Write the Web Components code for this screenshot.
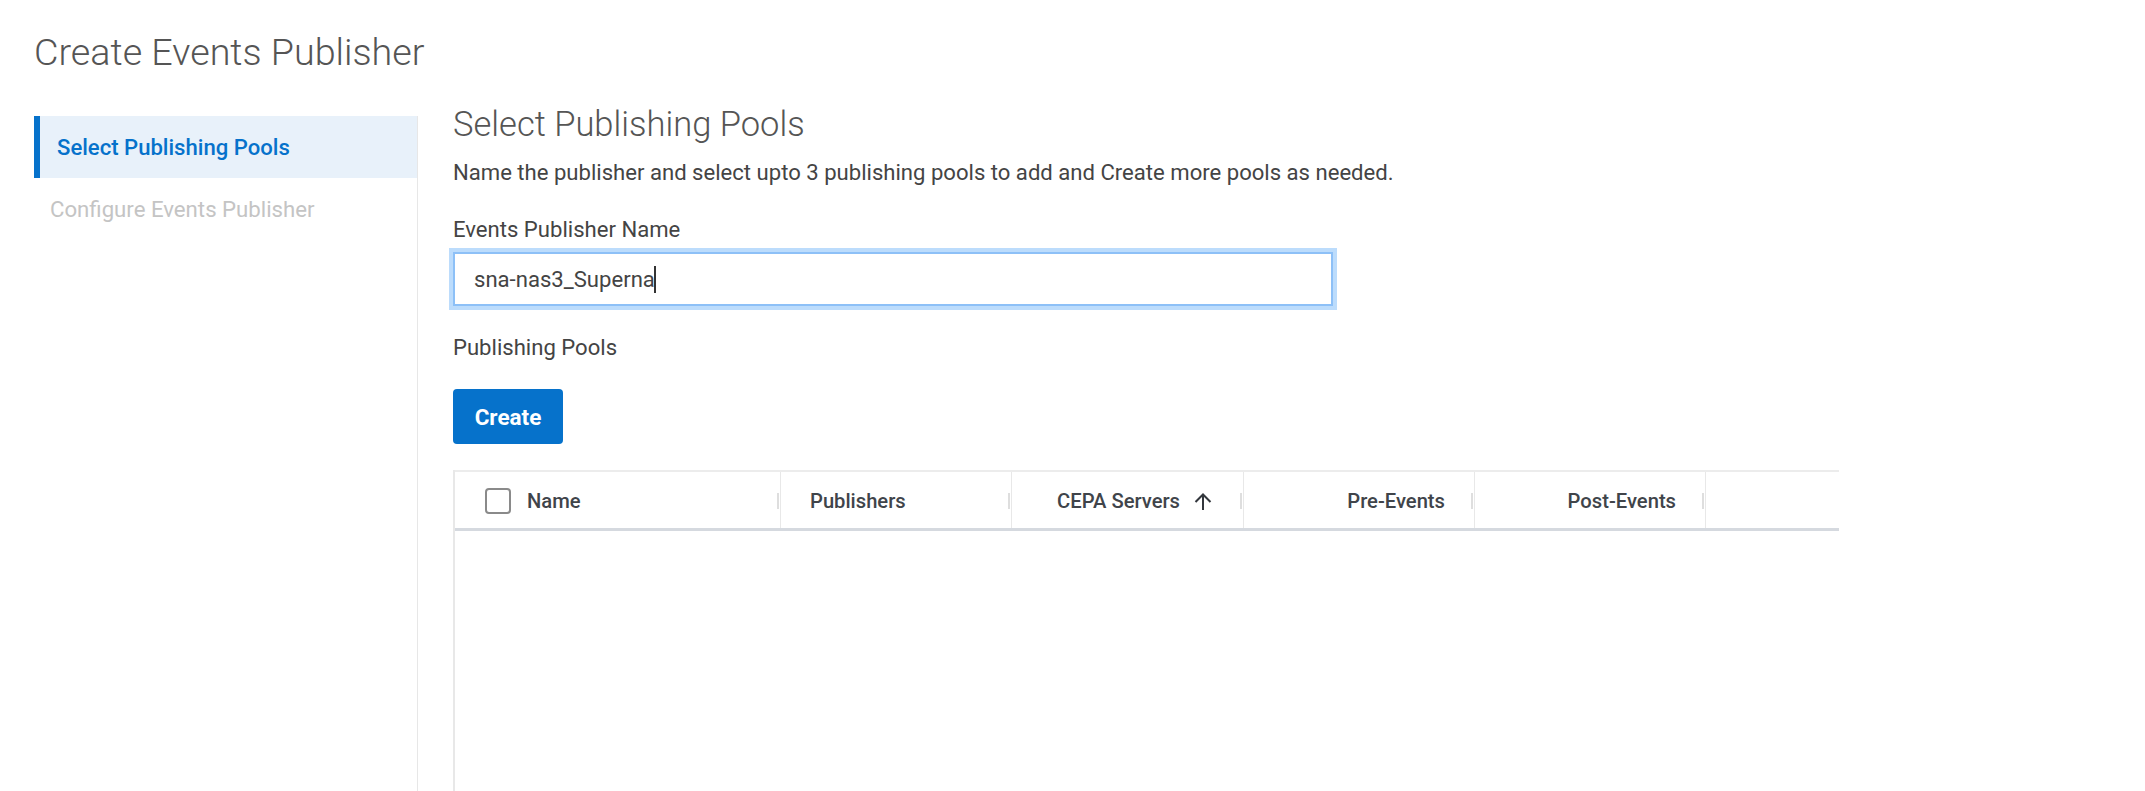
<!doctype html>
<html>
<head>
<meta charset="utf-8">
<title>Create Events Publisher</title>
<style>
html, body { margin:0; height:100%; background:#fff; overflow:hidden; }
body { font-family:Roboto, "Liberation Sans", sans-serif; color:#444; }
</style>
</head>
<body>
<wizard-page heading="Create Events Publisher">
    <wizard-step slot=steps active>Select Publishing Pools</wizard-step>
    <wizard-step slot=steps>Configure Events Publisher</wizard-step>

    <section-title>Select Publishing Pools</section-title>
    <section-hint>Name the publisher and select upto 3 publishing pools to add and Create more pools as needed.</section-hint>
    <text-field label="Events Publisher Name" value="sna-nas3_Superna"></text-field>
    <field-label>Publishing Pools</field-label>
    <primary-button>Create</primary-button>
    <pool-table>
        <pool-col check width=326>Name</pool-col>
        <pool-col width=231>Publishers</pool-col>
        <pool-col width=232 end sorted>CEPA Servers</pool-col>
        <pool-col width=231 end>Pre-Events</pool-col>
        <pool-col width=231 end>Post-Events</pool-col>
    </pool-table>
</wizard-page>

<script>
function define(name, html) {
    customElements.define(name, class extends HTMLElement {
        constructor() {
            super();
            this.attachShadow({mode: 'open'}).innerHTML = html;
        }
    });
}

customElements.define('wizard-page', class extends HTMLElement {
    constructor() {
        super();
        const shadow = this.attachShadow({mode: 'open'});
        shadow.innerHTML = `
        <style>
        :host { display:flex; flex-direction:column; height:100vh; }
        h1 { margin:0; height:100px; padding:35px 0 0 34px; box-sizing:border-box; font:300 37.7px/34px Roboto, sans-serif; color:#555; }
        .body { flex:1; min-height:0; display:flex; }
        nav { width:384px; box-sizing:border-box; margin:16px 0 0 34px; border-right:1px solid #e7e7e7; }
        main { flex:1; min-width:0; padding-left:35px; display:flex; flex-direction:column; }
        </style>
        <h1></h1>
        <div class=body>
            <nav><slot name=steps></slot></nav>
            <main><slot></slot></main>
        </div>`;
        shadow.querySelector('h1').textContent = this.getAttribute('heading');
    }
});

define('wizard-step', `
    <style>
    :host { display:flex; align-items:center; height:62px; box-sizing:border-box; padding-left:16px; font:400 22.2px Roboto, sans-serif; color:#c4c4c4; }
    :host([active]) { padding-left:17px; border-left:6px solid #0672cb; background:#e8f1fa; color:#0672cb; font-weight:500; font-size:22.1px; }
    </style>
    <slot></slot>`);

define('section-title', `
    <style>
    :host { display:block; flex:none; font:300 34.5px/48px Roboto, sans-serif; color:#555; }
    </style>
    <slot></slot>`);

define('section-hint', `
    <style>
    :host { display:block; flex:none; margin-top:11px; font:400 22.1px/27px Roboto, sans-serif; color:#444; }
    </style>
    <slot></slot>`);

define('field-label', `
    <style>
    :host { display:block; flex:none; margin-top:27px; font:400 22.1px/28px Roboto, sans-serif; color:#444; }
    </style>
    <slot></slot>`);

customElements.define('text-field', class extends HTMLElement {
    constructor() {
        super();
        const shadow = this.attachShadow({mode: 'open'});
        shadow.innerHTML = `
        <style>
        :host { display:block; flex:none; margin-top:29px; }
        label { display:block; font:400 22.1px/28px Roboto, sans-serif; color:#444; }
        .box { display:flex; align-items:center; width:880px; height:54px; box-sizing:border-box; margin-top:9px; padding-left:19px;
               border:2px solid #8dc0f7; box-shadow:0 0 0 4px #bcdcfc; background:#fff; font:400 22.1px Roboto, sans-serif; color:#444; }
        .caret { width:2px; height:27px; margin-left:-1px; background:#333; }
        </style>
        <label></label>
        <div class=box><span class=val></span><span class=caret></span></div>`;
        shadow.querySelector('label').textContent = this.getAttribute('label');
        shadow.querySelector('.val').textContent = this.getAttribute('value');
    }
});

define('primary-button', `
    <style>
    :host { display:flex; flex:none; align-items:center; justify-content:center; align-self:flex-start; width:110px; height:55px; margin-top:28px;
            border-radius:4px; background:#0672cb; color:#fff; font:700 22.5px Roboto, sans-serif; }
    </style>
    <slot></slot>`);

define('pool-table', `
    <style>
    :host { display:block; flex:1; min-height:0; width:1384px; margin:26px 0 0; border-left:2px solid #e8e8e8; }
    .head { display:flex; height:61px; box-sizing:border-box; border-top:2px solid #ececec; border-bottom:3px solid #d5d9df; }
    </style>
    <div class=head><slot></slot></div>`);

customElements.define('pool-col', class extends HTMLElement {
    constructor() {
        super();
        const shadow = this.attachShadow({mode: 'open'});
        shadow.innerHTML = `
        <style>
        :host { display:flex; align-items:center; flex:none; box-sizing:border-box; padding:2px 29px 0 29px; border-right:1px solid #e8e8e8;
                font:500 20.2px Roboto, sans-serif; color:#40444a;
                background:linear-gradient(#dedede,#dedede) right 1px top 21px no-repeat; background-size:2px 16px; }
        :host([end]) { justify-content:flex-end; }
        :host([sorted]) { padding-right:31px; }
        :host([check]) { padding-left:30px; }
        .box { width:26px; height:26px; box-sizing:border-box; margin:-1px 16px 0 0; border:2px solid #8a8a8a; border-radius:4px; }
        svg { width:18px; height:17px; margin-left:14px; }
        </style>
        ${this.hasAttribute('check') ? '<span class=box></span>' : ''}
        <slot></slot>
        ${this.hasAttribute('sorted') ? '<svg viewBox="0 0 18 17" fill="none" stroke="#33373d" stroke-width="2"><path d="M9 17V2M1.500 9 9 1.500 16.500 9"/></svg>' : ''}`;
        this.style.width = this.getAttribute('width') + 'px';
    }
});
</script>
</body>
</html>
